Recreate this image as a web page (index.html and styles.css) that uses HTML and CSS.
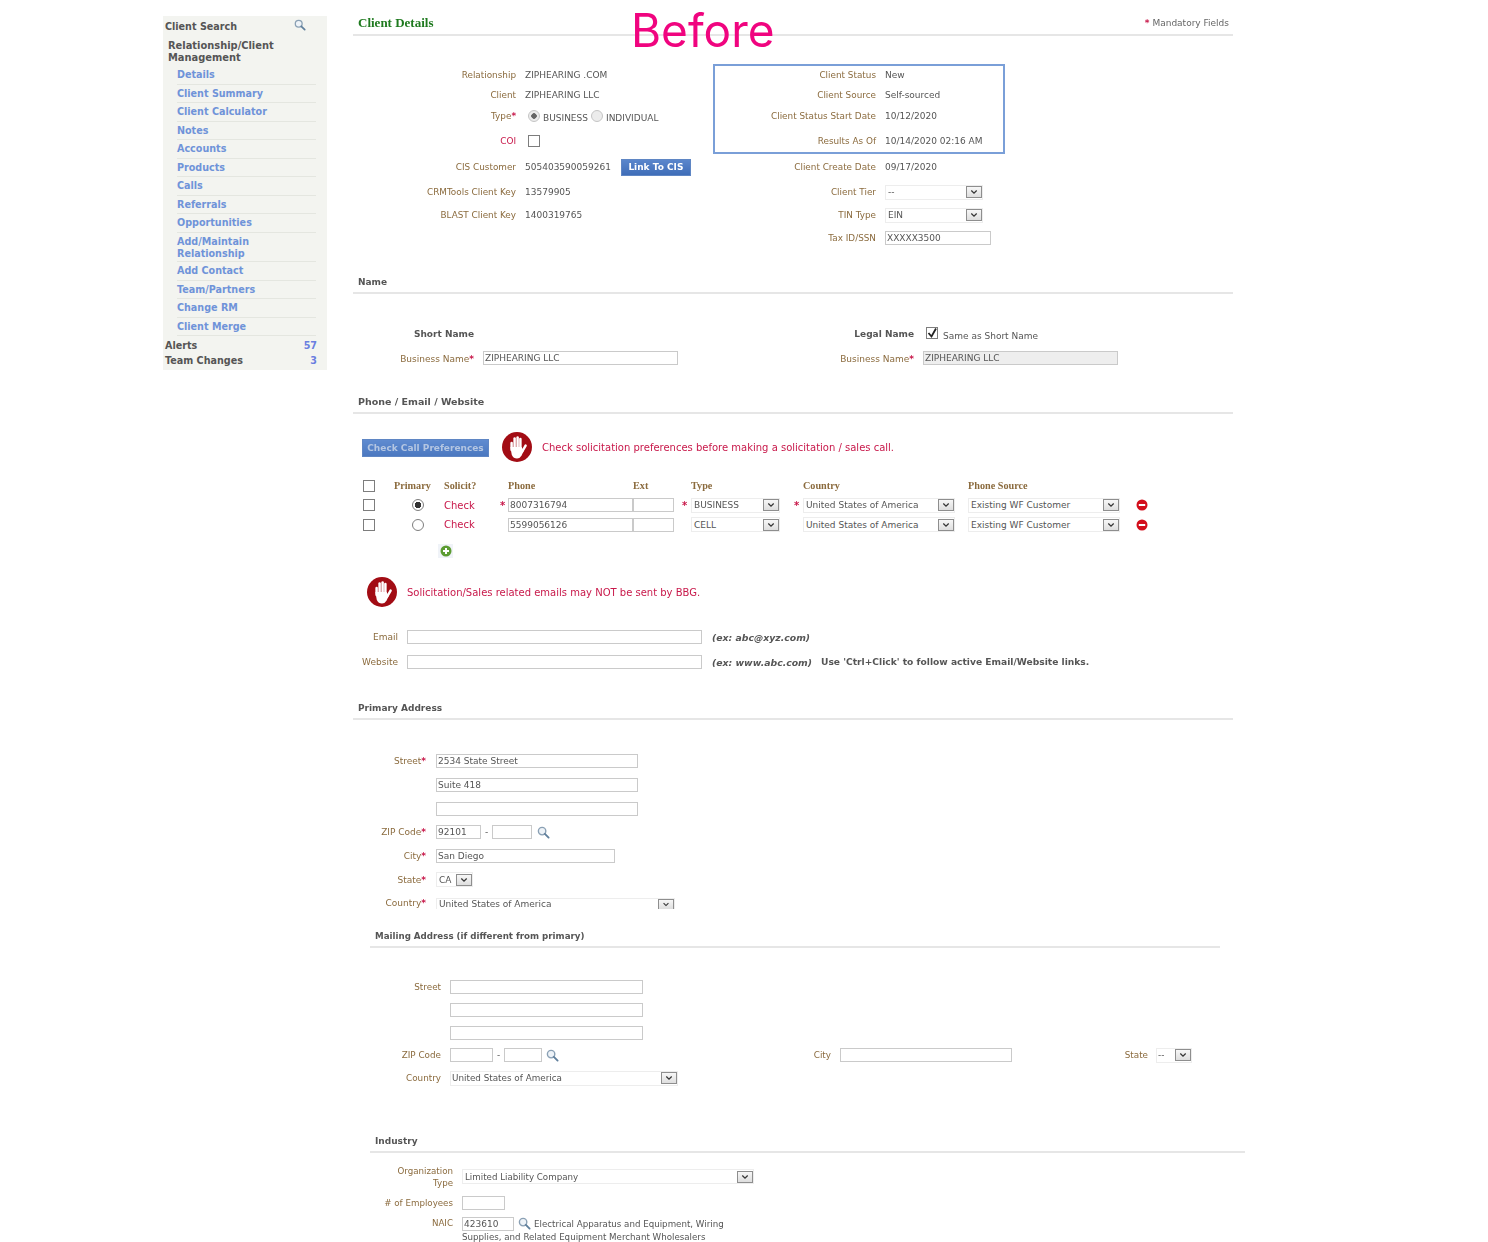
FILE: index.html
```html
<!DOCTYPE html>
<html>
    <head>
        <meta charset="utf-8">
        <title>Client Details</title>
        <link rel="stylesheet" href="styles.css">
    </head>
    <body>
        <svg class="defs" width="0" height="0">
            <symbol id="i_hand" viewBox="0 0 30 30">
                <circle cx="15" cy="15" r="15" fill="#a20c14"/>
                <g stroke="#fff" stroke-width="2.5" stroke-linecap="round" fill="none">
                    <path d="M9.6 11v7"/>
                    <path d="M12.6 6.6v9"/>
                    <path d="M15.6 5.6v9"/>
                    <path d="M18.4 7v9"/>
                    <path d="M20 20l3.6-6.4"/>
                </g>
                <path d="M8.4 15h11.2l2 4-2 4.500q-1.600 3-4.600 3-3.600 0-5.200-3.500z" fill="#fff"/>
            </symbol>
            <symbol id="i_glass" viewBox="0 0 14 14">
                <circle cx="5.500" cy="5.500" r="4" fill="#eef3f8" stroke="#8aa0b4" stroke-width="1.500"/>
                <path d="M8.500 8.500l4 4" stroke="#5f7f9c" stroke-width="2" stroke-linecap="round"/>
            </symbol>
            <symbol id="i_chev" viewBox="0 0 16 13">
                <path d="M4.500 4.500l3.500 3.500 3.500-3.500" fill="none" stroke="#333" stroke-width="1.600"/>
            </symbol>
            <symbol id="i_plus" viewBox="0 0 12 12">
                <circle cx="6" cy="6" r="5.500" fill="#5c9c32"/>
                <path d="M6 3v6M3 6h6" stroke="#fff" stroke-width="2"/>
            </symbol>
            <symbol id="i_minus" viewBox="0 0 12 12">
                <circle cx="6" cy="6" r="5.500" fill="#d30f1c"/>
                <path d="M2.800 6h6.400" stroke="#fff" stroke-width="2"/>
            </symbol>
        </svg>

        <div class="before">Before</div>

        <div class="page">
            <div class="sidebar">
                <div class="side_search">
                    <span>Client Search</span>
                    <svg class="side_glass"><use href="#i_glass"/></svg>
                </div>
                <div class="side_group">Relationship/Client Management</div>
                <div class="side_links">
                    <a>Details</a>
                    <a>Client Summary</a>
                    <a>Client Calculator</a>
                    <a>Notes</a>
                    <a>Accounts</a>
                    <a>Products</a>
                    <a>Calls</a>
                    <a>Referrals</a>
                    <a>Opportunities</a>
                    <a class="two_line">Add/Maintain Relationship</a>
                    <a>Add Contact</a>
                    <a>Team/Partners</a>
                    <a>Change RM</a>
                    <a>Client Merge</a>
                </div>
                <div class="side_count first"><span>Alerts</span><b>57</b></div>
                <div class="side_count"><span>Team Changes</span><b>3</b></div>
            </div>

            <div class="main">
                <div class="title_row">
                    <span class="title">Client Details</span>
                    <span class="mandatory"><i>*</i> Mandatory Fields</span>
                </div>

                <div class="details">
                    <div class="details_col">
                        <div class="field h20"><label>Relationship</label><span>ZIPHEARING .COM</span></div>
                        <div class="field h20"><label>Client</label><span>ZIPHEARING LLC</span></div>
                        <div class="field h23"><label>Type<i>*</i></label>
                            <span class="type_opts">
                                <span class="radio on soft"></span><span class="type_text">BUSINESS</span>
                                <span class="radio soft"></span><span class="type_text">INDIVIDUAL</span>
                            </span>
                        </div>
                        <div class="field h26"><label class="red">COI</label><span class="check coi"></span></div>
                        <div class="field h26"><label>CIS Customer</label><span>505403590059261</span><a class="btn btn_cis">Link To CIS</a></div>
                        <div class="field h24"><label>CRMTools Client Key</label><span>13579905</span></div>
                        <div class="field h22"><label>BLAST Client Key</label><span>1400319765</span></div>
                    </div>
                    <div class="details_col right">
                        <div class="status_box">
                            <div class="field h20"><label>Client Status</label><span>New</span></div>
                            <div class="field h20"><label>Client Source</label><span>Self-sourced</span></div>
                            <div class="field h23"><label>Client Status Start Date</label><span>10/12/2020</span></div>
                            <div class="field h26"><label>Results As Of</label><span>10/14/2020 02:16 AM</span></div>
                        </div>
                        <div class="field h26"><label>Client Create Date</label><span>09/17/2020</span></div>
                        <div class="field h24"><label>Client Tier</label><div class="sel w_tier"><span>--</span><svg class="arrow"><use href="#i_chev"/></svg></div></div>
                        <div class="field h22"><label>TIN Type</label><div class="sel w_tier"><span>EIN</span><svg class="arrow"><use href="#i_chev"/></svg></div></div>
                        <div class="field h23"><label>Tax ID/SSN</label><input class="inp w_tax" value="XXXXX3500"></div>
                    </div>
                </div>

                <div class="sec_head sec_name">Name</div>
                <div class="name_grid">
                    <div class="nfield"><b>Short Name</b></div>
                    <div class="nfield"><b>Legal Name</b><span class="check checked"><svg viewBox="0 0 12 12"><path d="M2.500 6l3 3.500 4.500-8" fill="none" stroke="#222" stroke-width="1.800"/></svg></span><span class="same">Same as Short Name</span></div>
                    <div class="nfield"><label>Business Name<i>*</i></label><input class="inp w_bname" value="ZIPHEARING LLC"></div>
                    <div class="nfield"><label>Business Name<i>*</i></label><input class="inp w_bname off" value="ZIPHEARING LLC"></div>
                </div>

                <div class="sec_head sec_phone">Phone / Email / Website</div>
                <div class="notice notice_call">
                    <a class="btn btn_pref">Check Call Preferences</a>
                    <svg class="hand"><use href="#i_hand"/></svg>
                    <span class="warn">Check solicitation preferences before making a solicitation / sales call.</span>
                </div>

                <div class="phone_grid">
                    <span class="check"></span>
                    <b class="ph">Primary</b>
                    <b class="ph">Solicit?</b>
                    <span></span>
                    <b class="ph">Phone</b>
                    <b class="ph">Ext</b>
                    <span></span>
                    <b class="ph">Type</b>
                    <span></span>
                    <b class="ph">Country</b>
                    <b class="ph">Phone Source</b>
                    <span></span>

                    <span class="check"></span>
                    <span class="radio on pick"></span>
                    <span class="check_link">Check</span>
                    <i class="star">*</i>
                    <input class="inp w_full" value="8007316794">
                    <input class="inp w_ext" value="">
                    <i class="star mid">*</i>
                    <div class="sel w_ptype"><span>BUSINESS</span><svg class="arrow"><use href="#i_chev"/></svg></div>
                    <i class="star far">*</i>
                    <div class="sel w_pwide"><span>United States of America</span><svg class="arrow"><use href="#i_chev"/></svg></div>
                    <div class="sel w_pwide"><span>Existing WF Customer</span><svg class="arrow"><use href="#i_chev"/></svg></div>
                    <svg class="round_btn"><use href="#i_minus"/></svg>

                    <span class="check"></span>
                    <span class="radio pick"></span>
                    <span class="check_link">Check</span>
                    <span></span>
                    <input class="inp w_full" value="5599056126">
                    <input class="inp w_ext" value="">
                    <span></span>
                    <div class="sel w_ptype"><span>CELL</span><svg class="arrow"><use href="#i_chev"/></svg></div>
                    <span></span>
                    <div class="sel w_pwide"><span>United States of America</span><svg class="arrow"><use href="#i_chev"/></svg></div>
                    <div class="sel w_pwide"><span>Existing WF Customer</span><svg class="arrow"><use href="#i_chev"/></svg></div>
                    <svg class="round_btn"><use href="#i_minus"/></svg>
                </div>

                <div class="add_row"><span class="add_btn"><svg><use href="#i_plus"/></svg></span></div>

                <div class="notice notice_mail">
                    <svg class="hand"><use href="#i_hand"/></svg>
                    <span class="warn">Solicitation/Sales related emails may NOT be sent by BBG.</span>
                </div>

                <div class="web_rows">
                    <div class="wfield"><label>Email</label><input class="inp w_web"><em>(ex: abc@xyz.com)</em></div>
                    <div class="wfield"><label>Website</label><input class="inp w_web"><em>(ex: www.abc.com)</em><b class="ctrl">Use 'Ctrl+Click' to follow active Email/Website links.</b></div>
                </div>

                <div class="sec_head sec_primary">Primary Address</div>
                <div class="addr_rows">
                    <div class="afield"><label>Street<i>*</i></label><input class="inp w_street" value="2534 State Street"></div>
                    <div class="afield"><label></label><input class="inp w_street" value="Suite 418"></div>
                    <div class="afield"><label></label><input class="inp w_street"></div>
                    <div class="afield"><label>ZIP Code<i>*</i></label><input class="inp w_zip" value="92101"><span class="dash">-</span><input class="inp w_zip2"><svg class="glass"><use href="#i_glass"/></svg></div>
                    <div class="afield"><label>City<i>*</i></label><input class="inp w_city" value="San Diego"></div>
                    <div class="afield"><label>State<i>*</i></label><div class="sel w_state"><span>CA</span><svg class="arrow"><use href="#i_chev"/></svg></div></div>
                    <div class="afield"><label>Country<i>*</i></label><div class="sel w_country cut"><span>United States of America</span><svg class="arrow"><use href="#i_chev"/></svg></div></div>
                </div>

                <div class="sec_head sub_head sec_mailing">Mailing Address (if different from primary)</div>
                <div class="mail_rows">
                    <div class="mfield"><label>Street</label><input class="inp w_mstreet"></div>
                    <div class="mfield"><label></label><input class="inp w_mstreet"></div>
                    <div class="mfield"><label></label><input class="inp w_mstreet"></div>
                    <div class="mfield">
                        <div class="mzip"><label>ZIP Code</label><input class="inp w_mzip"><span class="dash">-</span><input class="inp w_mzip2"><svg class="glass"><use href="#i_glass"/></svg></div>
                        <label class="l_city">City</label><input class="inp w_mcity">
                        <label class="l_state">State</label><div class="sel w_mstate"><span>--</span><svg class="arrow"><use href="#i_chev"/></svg></div>
                    </div>
                    <div class="mfield"><label>Country</label><div class="sel w_mcountry"><span>United States of America</span><svg class="arrow"><use href="#i_chev"/></svg></div></div>
                </div>

                <div class="sec_head sub_head sec_industry">Industry</div>
                <div class="ifield i_org"><label>Organization Type</label><div class="sel w_org"><span>Limited Liability Company</span><svg class="arrow"><use href="#i_chev"/></svg></div></div>
                <div class="ifield i_emp"><label># of Employees</label><input class="inp w_emp"></div>
                <div class="ifield i_naic"><label>NAIC</label>
                    <div class="naic_val"><input class="inp w_naic" value="423610"><svg class="glass"><use href="#i_glass"/></svg>Electrical Apparatus and Equipment, Wiring Supplies, and Related Equipment Merchant Wholesalers</div>
                </div>
            </div>
        </div>
    </body>
</html>
```

FILE: styles.css
```css
/* old verdana/georgia form, everything is small */
html, body {
    margin: 0;
    height: 1242px;
    overflow: hidden;
    background: #fff;
}
body {
    font-family: "DejaVu Sans", sans-serif;
    font-size: 9px;
    color: #555;
    position: relative;
}
.defs {
    position: absolute;
}
.before {
    position: absolute;
    left: 631px;
    top: 3px;
    font-family: "Inter", sans-serif;
    font-size: 46px;
    line-height: 54px;
    color: #f0047f;
    z-index: 2;
}
.page {
    display: flex;
    align-items: flex-start;
    padding-left: 163px;
    filter: blur(0.45px);
}
label {
    color: #8b6b3e;
}
label i, .mandatory i, .star {
    color: #c8184a;
    font-style: normal;
    font-weight: bold;
}

/* left nav */
.sidebar {
    width: 164px;
    height: 354px;
    margin-top: 16px;
    background: #f3f4f0;
    font-weight: bold;
    font-size: 9.600px;
    box-sizing: border-box;
}
.side_search {
    height: 20px;
    line-height: 21px;
    padding-left: 2px;
    position: relative;
    color: #555;
}
.side_glass {
    position: absolute;
    left: 131px;
    top: 3px;
    width: 12px;
    height: 12px;
}
.side_group {
    margin: 4px 0 2px 5px;
    line-height: 12px;
    width: 130px;
    color: #555;
    font-size: 9.900px;
}
.side_links a {
    display: block;
    width: 139px;
    margin-left: 14px;
    height: 18.500px;
    line-height: 17.500px;
    box-sizing: border-box;
    border-bottom: 1px solid #e4e6e0;
    color: #6f93d9;
}
.side_links a.two_line {
    height: 29.500px;
    line-height: 12px;
    padding-top: 3px;
}
.side_count {
    display: flex;
    justify-content: space-between;
    width: 152px;
    padding-left: 2px;
    height: 15px;
    line-height: 15px;
    color: #555;
}
.side_count.first {
    margin-top: 1.500px;
}
.side_count b {
    color: #6a7fe0;
}

/* main column */
.main {
    width: 880px;
    margin-left: 26px;
    padding-top: 14px;
}
.title_row {
    display: flex;
    justify-content: space-between;
    height: 20px;
    line-height: 18px;
    padding: 0 4px 0 5px;
    border-bottom: 2px solid #e6e6e6;
}
.title {
    font-family: "Liberation Serif", serif;
    font-weight: bold;
    font-size: 13px;
    color: #1f7a1f;
}
.mandatory {
    color: #666;
}
.details {
    display: flex;
    margin-top: 28px;
}
.details_col {
    width: 360px;
    padding-top: 0.500px;
}
.details_col label {
    width: 163px;
    font-size: 8.850px;
}
.details_col.right {
    width: 292px;
    padding-top: 0;
}
.details_col.right label {
    width: 163px;
}
.field {
    display: flex;
    align-items: center;
    gap: 9px;
}
.field label {
    text-align: right;
    flex: none;
}
.field .red {
    color: #c8184a;
}
.h20 { height: 20px; }
.h22 { height: 22px; }
.h23 { height: 23.500px; }
.h24 { height: 24px; }
.h26 { height: 26px; }
.status_box {
    outline: 2px solid #7a9fd8;
    outline-offset: -2px;
    height: 90px;
    padding-top: 0.500px;
    box-sizing: border-box;
}
.type_opts {
    display: flex;
    align-items: center;
    gap: 3px;
    margin-left: 3px;
}
.type_text {
    margin-top: 4px;
}
.coi {
    margin-left: 3px;
}
.btn {
    display: block;
    color: #fff;
    font-weight: bold;
    text-align: center;
    box-sizing: border-box;
    border: 1px solid #5f86c4;
    background: linear-gradient(#5a86cc, #3f6db8);
}
.btn_cis {
    width: 70px;
    height: 17px;
    line-height: 15px;
    margin-left: 1px;
}
.btn_pref {
    width: 127px;
    height: 18px;
    line-height: 16px;
    margin-top: 2px;
    color: #b4c6e2;
    background: linear-gradient(#5f8bd0, #4b78c0);
}

/* form bits */
.inp {
    height: 14px;
    box-sizing: border-box;
    border: 1px solid #cacaca;
    border-radius: 0;
    padding: 0 1px;
    margin: 0;
    background: #fff;
    font-family: "DejaVu Sans", sans-serif;
    font-size: 9px;
    color: #555;
    outline: none;
    flex: none;
}
.inp.off {
    background: #eeeeee;
}
.sel {
    display: flex;
    align-items: center;
    justify-content: space-between;
    box-sizing: border-box;
    height: 15px;
    line-height: 14px;
    padding: 0 0 0 2px;
    border: 1px solid #ededed;
    background: #fff;
    flex: none;
    white-space: nowrap;
}
.arrow {
    width: 16px;
    height: 12px;
    box-sizing: border-box;
    border: 1px solid #8e8e8e;
    background: linear-gradient(#f7f7f7, #dedede);
    flex: none;
}
.check {
    display: inline-block;
    width: 12px;
    height: 12px;
    box-sizing: border-box;
    border: 1px solid #7d7d7d;
    background: #fff;
    flex: none;
}
.check svg {
    display: block;
    width: 12px;
    height: 12px;
    margin: -1px;
}
.radio {
    display: block;
    width: 12px;
    height: 12px;
    box-sizing: border-box;
    border: 1px solid #7d7d7d;
    border-radius: 50%;
    background: #fff;
    flex: none;
}
.radio.soft {
    border-color: #c4c4c4;
    background: #ececec;
}
.radio.on {
    background: radial-gradient(circle, #333 0 3px, #fff 3.500px);
}
.radio.on.soft {
    background: radial-gradient(circle, #666 0 2.500px, #ececec 3px);
}
.glass {
    width: 13px;
    height: 13px;
    flex: none;
}
.dash {
    flex: none;
}
.sec_head {
    height: 20px;
    line-height: 21px;
    padding-left: 5px;
    border-bottom: 2px solid #e6e6e6;
    font-weight: bold;
    color: #555;
}
.sub_head {
    margin-left: 17px;
}
.sec_name { margin-top: 22.500px; }
.sec_phone { margin-top: 24px; font-size: 9.500px; line-height: 20px; }
.sec_primary { margin-top: 26px; }
.sec_mailing { margin-top: 11px; width: 845px; font-size: 8.700px; }
.sec_industry { margin-top: 41px; width: 870px; }

/* name */
.name_grid {
    display: grid;
    grid-template-columns: 440px 1fr;
    grid-auto-rows: 20px;
    row-gap: 4px;
    margin-top: 30px;
}
.nfield {
    display: flex;
    align-items: center;
    gap: 9px;
}
.nfield b {
    width: 121px;
    text-align: right;
}
.nfield label {
    width: 121px;
    text-align: right;
    padding-top: 1px;
}
.nfield .check {
    margin: -2px 3px 0 3px;
}
.same {
    margin-top: 4px;
    margin-left: -7px;
}
.w_bname { width: 195px; }
.w_tier { width: 98px; }
.w_tax { width: 106px; }

/* phones */
.notice {
    display: flex;
    align-items: center;
    height: 30px;
}
.hand {
    width: 30px;
    height: 30px;
    flex: none;
}
.warn {
    color: #c8184a;
    font-size: 10px;
    margin-left: 10px;
}
.notice_call {
    margin-top: 18px;
    padding-left: 9px;
}
.notice_call .hand {
    margin-left: 13px;
}
.phone_grid {
    display: grid;
    grid-template-columns: 31px 50px 56px 8px 125px 41px 17px 89px 23px 165px 165px 30px;
    grid-auto-rows: 19.500px;
    align-items: center;
    margin-top: 14px;
    padding-left: 10px;
}
.ph {
    font-family: "Liberation Serif", serif;
    font-size: 10.200px;
    color: #8b6b3e;
}
.w_ptype { width: 89px; }
.w_pwide { width: 152px; }
.pick {
    margin-left: 18px;
}
.check_link {
    color: #c8184a;
    font-size: 10px;
}
.star {
    font-size: 10px;
}
.star.mid {
    margin-left: 8px;
}
.star.far {
    margin-left: 14px;
}
.w_full { width: 125px; }
.w_ext { width: 41px; }
.round_btn {
    width: 12px;
    height: 12px;
    margin-left: 3px;
}
.add_row {
    margin-top: 9.500px;
    padding-left: 85px;
    height: 14px;
}
.add_btn {
    display: block;
    width: 15px;
    height: 14px;
    background: #f0f3f8;
}
.add_btn svg {
    display: block;
    width: 12px;
    height: 12px;
    margin-left: 1.500px;
    padding-top: 1px;
}
.notice_mail {
    margin-top: 19px;
    padding-left: 14px;
}
.web_rows {
    margin-top: 20px;
}
.wfield {
    display: flex;
    align-items: center;
    gap: 9px;
    height: 20px;
    margin-bottom: 5px;
}
.wfield:last-child {
    margin-bottom: 0;
}
.wfield label {
    width: 45px;
    text-align: right;
    flex: none;
}
.wfield em {
    margin-left: 1px;
    font-weight: bold;
    font-size: 9.300px;
    white-space: nowrap;
}
.w_web { width: 295px; }
.ctrl {
    white-space: nowrap;
    font-size: 9.150px;
}

/* address */
.addr_rows {
    margin-top: 29.500px;
}
.afield {
    display: flex;
    align-items: center;
    gap: 4px;
    height: 23.700px;
}
.afield label {
    width: 73px;
    margin-right: 6px;
    text-align: right;
    flex: none;
}
.afield .glass {
    margin-left: 1px;
}
.w_street { width: 202px; }
.w_zip { width: 45px; }
.w_zip2 { width: 40px; }
.w_city { width: 179px; }
.w_state { width: 37px; }
.w_country { width: 239px; }
.cut {
    height: 11px;
    border-bottom: none;
    align-items: flex-start;
    line-height: 11px;
}
.cut .arrow {
    height: 10px;
    border-bottom: none;
}
.mail_rows {
    margin-top: 27px;
    font-size: 8.800px;
}
.mfield {
    display: flex;
    align-items: center;
    height: 22.900px;
    gap: 9px;
}
.mfield .sel {
    padding-left: 1px;
}
.mfield > label:first-child, .mzip label {
    width: 88px;
    text-align: right;
    flex: none;
}
.mzip {
    display: flex;
    align-items: center;
    gap: 4px;
    width: 426px;
    flex: none;
}
.mzip label {
    margin-right: 5px;
}
.l_city {
    width: 43px;
    text-align: right;
    flex: none;
}
.l_state {
    width: 127px;
    text-align: right;
    flex: none;
}
.w_mstreet { width: 193px; }
.w_mzip { width: 43px; }
.w_mzip2 { width: 38px; }
.w_mcity { width: 172px; }
.w_mstate { width: 36px; margin-left: -1px; }
.w_mcountry { width: 228px; }

/* industry */
.ifield {
    display: flex;
    gap: 9px;
    height: 24px;
    align-items: center;
    font-size: 8.700px;
}
.ifield label {
    width: 100px;
    box-sizing: border-box;
    text-align: right;
    line-height: 12px;
    flex: none;
}
.i_org label {
    padding-left: 40px;
}
.i_org { margin-top: 12px; }
.i_emp { margin-top: 2px; }
.i_naic {
    margin-top: 2px;
    align-items: flex-start;
}
.w_org { width: 292px; }
.w_emp { width: 43px; }
.w_naic { width: 52px; vertical-align: middle; }
.naic_val {
    width: 275px;
    line-height: 13px;
}
.naic_val .glass {
    vertical-align: middle;
    margin: 0 3px 0 4px;
}
```
